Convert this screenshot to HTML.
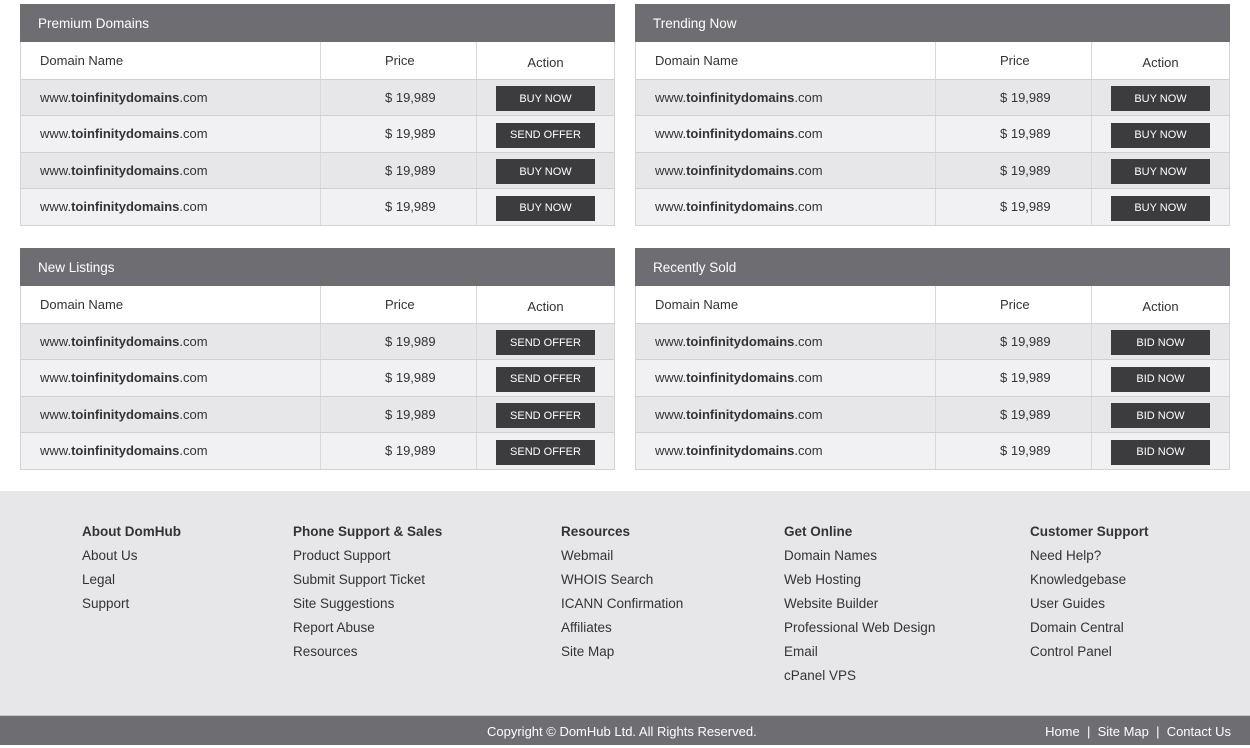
<!DOCTYPE html>
<html><head><style>
*{margin:0;padding:0;box-sizing:border-box}
body{width:1250px;height:748px;background:#fff;font-family:"Liberation Sans",sans-serif;color:#333;position:relative;overflow:hidden}
.panel{position:absolute;width:595px;border:1px solid #d4d4d6;border-top:none}
.hd{height:38px;background:#6e6e72;color:#fff;font-size:13.5px;line-height:40px;padding-left:18px;margin:0 -1px;}
.row{height:36.5px;display:flex;border-top:1px solid #d0d0d2;font-size:13px}
.row.h{border-top:none;background:#fff}
.row div{display:flex;align-items:center}
.c1{width:300px;padding-left:19px;border-right:1px solid #d8d8da}
.c2{width:156px;border-right:1px solid #d8d8da;padding-left:64px}
.c3{flex:1;justify-content:center}
.o{background:#e7e7e9}.e{background:#f1f1f3}
.btn{width:99px;height:25px;background:#3c3c3e;color:#fff;font-size:11px;display:flex;align-items:center;justify-content:center;margin-top:3px}
b{font-weight:bold}
.foot{position:absolute;top:491px;left:0;width:1250px;height:224px;background:#e7e7e9}
.col{position:absolute;top:31px;font-size:13.5px;line-height:24px;color:#333}
.col h4{font-size:13.5px;font-weight:bold;line-height:18px;margin-bottom:3px;margin-top:1px}
.bar{position:absolute;top:715px;left:0;width:1250px;height:30px;background:#6e6e72;color:#fff;font-size:13px;line-height:31px;border-top:1px solid #c8c8ca}
</style></head><body>

<div class="panel" style="left:20px;top:4px">
<div class="hd">Premium Domains</div>
<div class="row h"><div class="c1">Domain Name</div><div class="c2">Price</div><div class="c3" style="padding-top:4px">Action</div></div>
<div class="row o"><div class="c1">www.<b>toinfinitydomains</b>.com</div><div class="c2">$ 19,989</div><div class="c3"><span class="btn">BUY NOW</span></div></div>
<div class="row e"><div class="c1">www.<b>toinfinitydomains</b>.com</div><div class="c2">$ 19,989</div><div class="c3"><span class="btn">SEND OFFER</span></div></div>
<div class="row o"><div class="c1">www.<b>toinfinitydomains</b>.com</div><div class="c2">$ 19,989</div><div class="c3"><span class="btn">BUY NOW</span></div></div>
<div class="row e"><div class="c1">www.<b>toinfinitydomains</b>.com</div><div class="c2">$ 19,989</div><div class="c3"><span class="btn">BUY NOW</span></div></div>
</div>

<div class="panel" style="left:635px;top:4px">
<div class="hd">Trending Now</div>
<div class="row h"><div class="c1">Domain Name</div><div class="c2">Price</div><div class="c3" style="padding-top:4px">Action</div></div>
<div class="row o"><div class="c1">www.<b>toinfinitydomains</b>.com</div><div class="c2">$ 19,989</div><div class="c3"><span class="btn">BUY NOW</span></div></div>
<div class="row e"><div class="c1">www.<b>toinfinitydomains</b>.com</div><div class="c2">$ 19,989</div><div class="c3"><span class="btn">BUY NOW</span></div></div>
<div class="row o"><div class="c1">www.<b>toinfinitydomains</b>.com</div><div class="c2">$ 19,989</div><div class="c3"><span class="btn">BUY NOW</span></div></div>
<div class="row e"><div class="c1">www.<b>toinfinitydomains</b>.com</div><div class="c2">$ 19,989</div><div class="c3"><span class="btn">BUY NOW</span></div></div>
</div>

<div class="panel" style="left:20px;top:248px">
<div class="hd">New Listings</div>
<div class="row h"><div class="c1">Domain Name</div><div class="c2">Price</div><div class="c3" style="padding-top:4px">Action</div></div>
<div class="row o"><div class="c1">www.<b>toinfinitydomains</b>.com</div><div class="c2">$ 19,989</div><div class="c3"><span class="btn">SEND OFFER</span></div></div>
<div class="row e"><div class="c1">www.<b>toinfinitydomains</b>.com</div><div class="c2">$ 19,989</div><div class="c3"><span class="btn">SEND OFFER</span></div></div>
<div class="row o"><div class="c1">www.<b>toinfinitydomains</b>.com</div><div class="c2">$ 19,989</div><div class="c3"><span class="btn">SEND OFFER</span></div></div>
<div class="row e"><div class="c1">www.<b>toinfinitydomains</b>.com</div><div class="c2">$ 19,989</div><div class="c3"><span class="btn">SEND OFFER</span></div></div>
</div>

<div class="panel" style="left:635px;top:248px">
<div class="hd">Recently Sold</div>
<div class="row h"><div class="c1">Domain Name</div><div class="c2">Price</div><div class="c3" style="padding-top:4px">Action</div></div>
<div class="row o"><div class="c1">www.<b>toinfinitydomains</b>.com</div><div class="c2">$ 19,989</div><div class="c3"><span class="btn">BID NOW</span></div></div>
<div class="row e"><div class="c1">www.<b>toinfinitydomains</b>.com</div><div class="c2">$ 19,989</div><div class="c3"><span class="btn">BID NOW</span></div></div>
<div class="row o"><div class="c1">www.<b>toinfinitydomains</b>.com</div><div class="c2">$ 19,989</div><div class="c3"><span class="btn">BID NOW</span></div></div>
<div class="row e"><div class="c1">www.<b>toinfinitydomains</b>.com</div><div class="c2">$ 19,989</div><div class="c3"><span class="btn">BID NOW</span></div></div>
</div>

<div class="foot">
<div class="col" style="left:82px"><h4>About DomHub</h4>About Us<br>Legal<br>Support</div>
<div class="col" style="left:293px"><h4>Phone Support &amp; Sales</h4>Product Support<br>Submit Support Ticket<br>Site Suggestions<br>Report Abuse<br>Resources</div>
<div class="col" style="left:561px"><h4>Resources</h4>Webmail<br>WHOIS Search<br>ICANN Confirmation<br>Affiliates<br>Site Map</div>
<div class="col" style="left:784px"><h4>Get Online</h4>Domain Names<br>Web Hosting<br>Website Builder<br>Professional Web Design<br>Email<br>cPanel VPS</div>
<div class="col" style="left:1030px"><h4>Customer Support</h4>Need Help?<br>Knowledgebase<br>User Guides<br>Domain Central<br>Control Panel</div>
</div>
<div class="bar"><span style="position:absolute;left:487px">Copyright © DomHub Ltd. All Rights Reserved.</span><span style="position:absolute;right:19px">Home &nbsp;|&nbsp; Site Map &nbsp;|&nbsp; Contact Us</span></div>
</body></html>
